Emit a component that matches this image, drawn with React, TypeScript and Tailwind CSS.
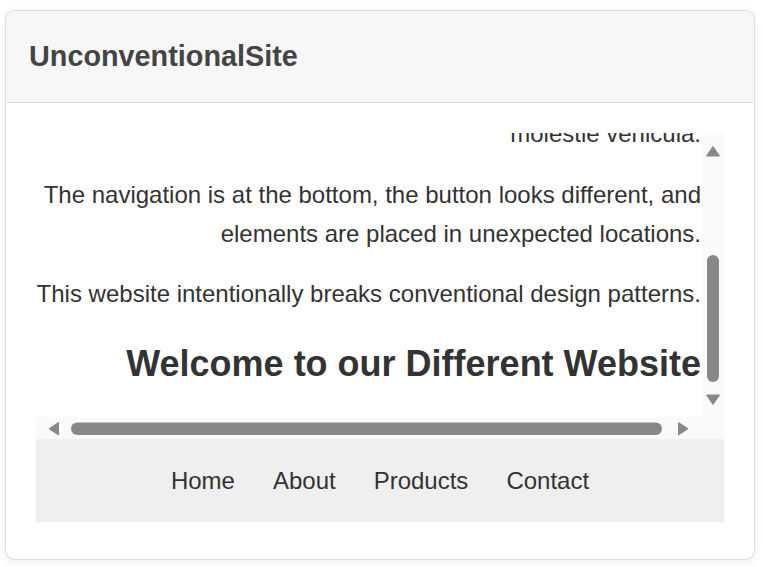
const links = ['Home', 'About', 'Products', 'Contact'];

// Scrollbars are drawn, since the page screenshot hides native ones
function VerticalScrollbar() {
  return (
    <svg width="22" height="284" viewBox="0 0 22 284" className="block">
      <rect width="22" height="284" fill="#fafafa" />
      <polygon points="4.5,23 11,13.5 17.5,23" fill="#888" stroke="#888" strokeWidth="1" strokeLinejoin="round" />
      <rect x="5" y="122" width="12" height="127" rx="6" fill="#888" />
      <polygon points="4.5,262 17.5,262 11,271.5" fill="#888" stroke="#888" strokeWidth="1" strokeLinejoin="round" />
    </svg>
  );
}

function HorizontalScrollbar() {
  return (
    <svg width="666" height="22" viewBox="0 0 666 22" className="block">
      <rect width="666" height="22" fill="#fafafa" />
      <polygon points="22.5,5.5 22.5,18 13,11.75" fill="#888" stroke="#888" strokeWidth="1" strokeLinejoin="round" />
      <rect x="35" y="5.5" width="591" height="12.5" rx="6.25" fill="#888" />
      <polygon points="642.5,5.5 642.5,18 652,11.75" fill="#888" stroke="#888" strokeWidth="1" strokeLinejoin="round" />
    </svg>
  );
}

export default function App() {
  return (
    <div className="min-h-screen bg-white pt-[10px] pl-[5px] font-['Liberation_Sans',Arial,sans-serif]">
      <div className="w-[750px] overflow-hidden rounded-[10px] border border-[#dcdcdc] bg-white shadow-[0_2px_8px_rgba(0,0,0,0.07)]">
        {/* Header */}
        <header className="flex h-[92px] items-center border-b border-[#dcdcdc] bg-[#f7f7f7] pl-[23px]">
          <h1 className="text-[28.8px] font-bold text-[#444]">UnconventionalSite</h1>
        </header>

        <main className="px-[30px] pt-[30px] pb-[37px]">
          {/* Content box, stacked bottom-up and scrolled to the end */}
          <div className="grid h-[306px] grid-cols-[1fr_22px] grid-rows-[284px_22px]">
            <div className="flex flex-col-reverse overflow-hidden pr-[1px] text-right text-[#333]">
              <h2 className="mt-[6px] mb-[31.5px] text-[36px] leading-[1.2] font-bold">
                Welcome to our Different Website
              </h2>
              <p className="mb-[22.5px] text-[24px] leading-[1.6]">
                This website intentionally breaks conventional design patterns.
              </p>
              <p className="mb-[22.5px] text-[24px] leading-[1.6]">
                The navigation is at the bottom, the button looks different, and elements are placed in unexpected
                locations.
              </p>
              <p className="mb-[22.5px] shrink-0 text-[24px] leading-[1.6]">
                Lorem ipsum dolor sit amet, consectetur adipiscing elit. Integer posuere erat a ante venenatis dapibus
                posuere velit aliquet. Cras mattis consectetur purus sit amet fermentum. Donec sed odio dui, nullam
                quis risus eget urna mollis ornare vel eu leo. Vivamus sagittis lacus vel augue laoreet rutrum faucibus
                dolor auctor. Aenean lacinia bibendum nulla sed consectetur, praesent commodo cursus magna vel
                scelerisque nisl
                <br />
                molestie vehicula.
              </p>
            </div>
            <VerticalScrollbar />
            <HorizontalScrollbar />
            <div className="bg-[#fafafa]" />
          </div>

          {/* Navigation at the bottom */}
          <nav className="flex h-[83px] items-center justify-center gap-[38px] bg-[#efefef] text-[24px] text-[#333]">
            {links.map((l) => (
              <a key={l} href="#">
                {l}
              </a>
            ))}
          </nav>
        </main>
      </div>
    </div>
  );
}
